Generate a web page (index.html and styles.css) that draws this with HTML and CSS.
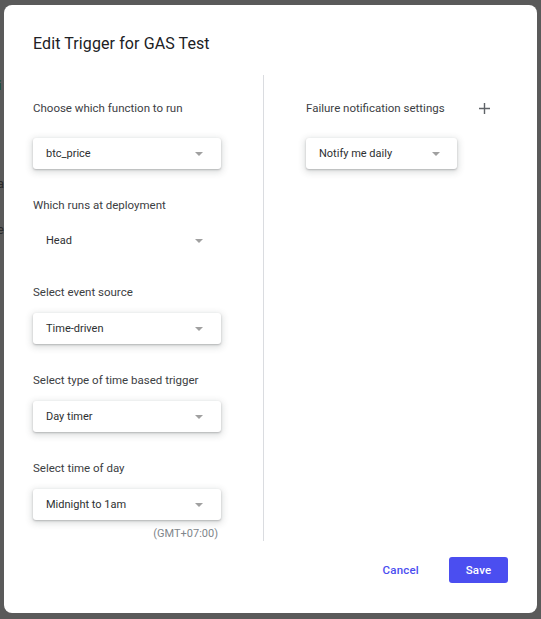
FILE: index.html
```html
<!DOCTYPE html>
<html>
<head>
<meta charset="utf-8">
<link rel="stylesheet" href="styles.css">
</head>
<body>
<div class="backdrop-bits">
  <span class="bit bit-green">i</span>
  <span class="bit bit-a">a</span>
  <span class="bit bit-e">e</span>
</div>
<div class="dialog">
  <h1 class="title">Edit Trigger for GAS Test</h1>
  <div class="body">
    <div class="col col-left">
      <div class="group first">
        <div class="label">Choose which function to run</div>
        <div class="select"><span>btc_price</span><i class="arrow"></i></div>
      </div>
      <div class="group">
        <div class="label">Which runs at deployment</div>
        <div class="select plain"><span>Head</span><i class="arrow"></i></div>
      </div>
      <div class="group boxed">
        <div class="label">Select event source</div>
        <div class="select"><span>Time-driven</span><i class="arrow"></i></div>
      </div>
      <div class="group boxed">
        <div class="label">Select type of time based trigger</div>
        <div class="select"><span>Day timer</span><i class="arrow"></i></div>
      </div>
      <div class="group boxed">
        <div class="label">Select time of day</div>
        <div class="select"><span>Midnight to 1am</span><i class="arrow"></i></div>
        <div class="tz">(GMT+07:00)</div>
      </div>
    </div>
    <div class="col col-right">
      <div class="group first">
        <div class="label label-row">
          <span>Failure notification settings</span>
          <svg class="plus" width="11" height="11" viewBox="0 0 11 11"><path d="M5.5 0v11M0 5.5h11" stroke="#5f6368" stroke-width="1.4" fill="none"/></svg>
        </div>
        <div class="select small"><span>Notify me daily</span><i class="arrow"></i></div>
      </div>
    </div>
  </div>
  <div class="footer">
    <button class="btn btn-text">Cancel</button>
    <button class="btn btn-primary">Save</button>
  </div>
</div>
</body>
</html>
```

FILE: styles.css
```css
html, body {
  margin: 0;
  padding: 0;
}
body {
  background: #5a5a5a;
  width: 541px;
  height: 619px;
  overflow: hidden;
  font-family: Roboto, "Liberation Sans", Arial, sans-serif;
  position: relative;
}
.backdrop-bits {
  position: absolute;
  left: 0;
  top: 0;
}
.bit {
  position: absolute;
  font-size: 13px;
  color: #2a2a2a;
  left: -3px;
}
.bit-green { top: 78px; color: #1b4d22; font-weight: 700; left: -2px; }
.bit-a { top: 176px; }
.bit-e { top: 222px; }
.dialog {
  position: relative;
  margin: 5px 0 0 4px;
  width: 533px;
  height: 608px;
  box-sizing: border-box;
  background: #fff;
  border-radius: 8px;
  padding: 29px 29px 0 29px;
  display: flex;
  flex-direction: column;
}
.title {
  margin: 0;
  font-size: 16px;
  line-height: 20px;
  font-weight: 400;
  color: #202124;
  letter-spacing: 0.1px;
}
.body {
  display: flex;
  margin-top: 21px;
  height: 466px;
}
.col-left {
  width: 231px;
  border-right: 1px solid #dadce0;
  padding-top: 25px;
  box-sizing: border-box;
}
.col-right {
  padding-left: 42px;
  padding-top: 25px;
  flex: 1;
}
.group {
  margin-bottom: 28px;
}
.group.boxed {
  margin-bottom: 28.5px;
}
.label {
  font-size: 11.5px;
  line-height: 16px;
  color: #3c4043;
  margin-bottom: 12px;
}
.group.boxed .label {
  margin-bottom: 12.5px;
}
.group.first .label {
  margin-bottom: 22px;
}
.label-row {
  display: flex;
  align-items: center;
  justify-content: space-between;
  width: 184px;
}
.plus {
  display: block;
}
.select {
  width: 188px;
  height: 31px;
  box-sizing: border-box;
  padding: 0 18px 0 13px;
  display: flex;
  align-items: center;
  justify-content: space-between;
  border-radius: 3px;
  background: #fff;
  font-size: 11px;
  color: #2d2f31;
  box-shadow: 0 1px 2px rgba(60,64,67,0.3), 0 2px 6px 2px rgba(60,64,67,0.15);
}
.select.plain {
  box-shadow: none;
}
.select.small {
  width: 151px;
  padding-right: 17px;
}
.arrow {
  display: block;
  width: 0;
  height: 0;
  border-left: 4px solid transparent;
  border-right: 4px solid transparent;
  border-top: 4px solid #a0a0a0;
  margin-top: 1px;
}
.tz {
  width: 188px;
  text-align: right;
  box-sizing: border-box;
  padding-right: 3px;
  margin-top: 7px;
  font-size: 11px;
  line-height: 14px;
  color: #80868b;
}
.footer {
  display: flex;
  justify-content: flex-end;
  align-items: center;
  margin-top: 16px;
  gap: 30px;
}
.btn {
  font-family: Roboto, "Liberation Sans", Arial, sans-serif;
  font-size: 11.5px;
  font-weight: 500;
  border: none;
  cursor: pointer;
  padding: 0;
  height: 26px;
  letter-spacing: 0.2px;
}
.btn-text {
  background: transparent;
  color: #4b4ef0;
}
.btn-primary {
  background: #4b4ef0;
  color: #fff;
  width: 59px;
  border-radius: 3px;
}
```
